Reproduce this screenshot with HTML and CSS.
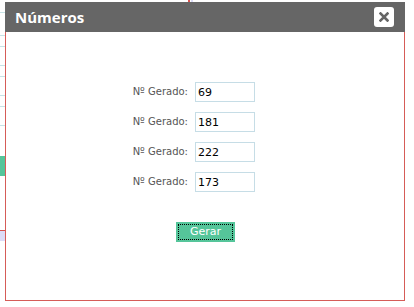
FILE: index.html
```html
<!DOCTYPE html>
<html lang="pt">
<head>
    <meta charset="utf-8">
    <meta name="viewport" content="width=device-width,initial-scale=1.0">
    <link rel="stylesheet" href="styles.css">
</head>
<body>
    <div class="page">
        <div class="grid-line" style="top:12px"></div>
        <div class="grid-line" style="top:35px"></div>
        <div class="grid-line" style="top:46px"></div>
        <div class="grid-line" style="top:65px"></div>
        <div class="grid-line" style="top:76px"></div>
        <div class="grid-line" style="top:95px"></div>
        <div class="grid-line" style="top:106px"></div>
        <div class="grid-line" style="top:125px"></div>
        <div class="page-btn"></div>
        <div class="page-mark"></div>
        <div class="page-top"></div>
    </div>

    <div class="dialog">
        <div class="dialog-title">
            <span>Números</span>
            <a href="#" class="close">
                <svg width="10" height="10" viewBox="0 0 10 10"><path d="M1.5 1.5 L8.5 8.5 M8.5 1.5 L1.5 8.5" stroke="#666" stroke-width="2.6" stroke-linecap="square"/></svg>
            </a>
        </div>
        <div class="dialog-body">
            <div class="fields">
                <label>Nº Gerado:</label><input type="text" value="69">
                <label>Nº Gerado:</label><input type="text" value="181">
                <label>Nº Gerado:</label><input type="text" value="222">
                <label>Nº Gerado:</label><input type="text" value="173">
            </div>
            <div class="actions">
                <button class="btn-gerar"><span>Gerar</span></button>
            </div>
        </div>
    </div>
</body>
</html>
```

FILE: styles.css
```css
body {margin: 0; background: #fff; font-family: Tahoma, "DejaVu Sans", sans-serif;}
.page {position: relative; width: 414px; height: 307px; overflow: hidden;}
.grid-line {position: absolute; left: 0; width: 6px; height: 1px; background: #c7e3e6;}
.page-btn {position: absolute; left: 0; top: 156px; width: 6px; height: 20px; background: #55c59a;}
.page-mark {position: absolute; left: 0; top: 230px; width: 6px; height: 10px; background: #dcdcf8; border-top: 1px solid #d9534f;}
.page-top {position: absolute; left: 188px; top: 0; width: 2px; height: 3px; background: #d9534f; box-shadow: 3px 0 0 #dcdcf8;}

.dialog {position: absolute; left: 5px; top: 2px; width: 398px; height: 298px; background: #fff;
    border: 1px solid #d65c58; border-top: none;}
.dialog-title {display: flex; align-items: center; justify-content: space-between; height: 30px;
    margin: 0 -1px; padding: 0 11px 0 10px; background: #666; color: #fff;
    font-family: "Open Sans", sans-serif; font-weight: bold; font-size: 15px;}
.close {display: flex; align-items: center; justify-content: center; width: 20px; height: 20px;
    background: #fff; border-radius: 3px;}

.dialog-body {padding-top: 50px;}
.fields {display: grid; grid-template-columns: 60px 60px; column-gap: 7px; row-gap: 10px; margin-left: 122px;}
.fields label {text-align: right; line-height: 20px; font-family: "DejaVu Sans", sans-serif; font-size: 10px; color: #555; white-space: nowrap;}
.fields input {box-sizing: border-box; width: 60px; height: 20px; margin: 0; padding: 0 2px;
    border: 1px solid #c6dde6; font-family: "DejaVu Sans", sans-serif; font-size: 11px; color: #000; outline: none;}

.actions {display: flex; justify-content: center; margin-top: 30px; padding-left: 1px;}
.btn-gerar {width: 59px; height: 20px; padding: 2px; border: none; background: #55c59a; cursor: pointer;}
.btn-gerar span {display: block; height: 100%; box-sizing: border-box; border: 1px dotted #000;
    line-height: 14px; color: #fff; font-family: "DejaVu Sans", sans-serif; font-size: 11px;}
```
